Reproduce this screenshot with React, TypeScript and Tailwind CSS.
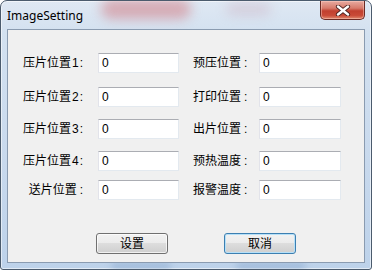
import React from "react";

const rows: { left: string; num: string; right: string; gap: string }[] = [
  { left: "压片位置", num: "1", right: "预压位置", gap: "mt-[23px]" },
  { left: "压片位置", num: "2", right: "打印位置", gap: "mt-[14px]" },
  { left: "压片位置", num: "3", right: "出片位置", gap: "mt-[12px]" },
  { left: "压片位置", num: "4", right: "预热温度", gap: "mt-[12px]" },
  { left: "送片位置", num: "", right: "报警温度", gap: "mt-[9px]" },
];

const font = "font-['Liberation_Sans','Noto_Sans_CJK_SC',sans-serif]";

function Label({ text, num }: { text: string; num?: string }) {
  return (
    <span className="whitespace-nowrap">
      {text}
      {num ? <span className="ml-[1px]">{num}</span> : null}
      <span className={num ? "ml-[1px]" : "ml-[3px]"}>:</span>
    </span>
  );
}

function TextBox({ width }: { width: string }) {
  return (
    <div
      className={`${width} h-[20px] flex items-center pl-[3px] bg-white border border-[#e3e9ef] border-t-[#abadb3] border-l-[#e2e3ea] text-[12px] text-black ${font}`}
    >
      0
    </div>
  );
}

function CloseButton() {
  return (
    <div className="w-[45px] h-[19px] rounded-b-[5px] border border-t-0 border-[#6b2a24] bg-[linear-gradient(#e8aba1,#d77a6b_40%,#c1402f_55%,#c94a37_80%,#e08a6f)] shadow-[inset_0_0_0_1px_rgba(255,210,200,0.45)] flex items-center justify-center">
      <svg width="16" height="11" viewBox="0 0 16 11">
        <path d="M3 1.5 L13 9.5 M13 1.5 L3 9.5" stroke="#4a2220" strokeWidth="4.2" strokeLinecap="round" />
        <path d="M3 1.5 L13 9.5 M13 1.5 L3 9.5" stroke="#ffffff" strokeWidth="2.4" strokeLinecap="round" />
      </svg>
    </div>
  );
}

function DialogButton({ label, isDefault }: { label: string; isDefault?: boolean }) {
  return (
    <button
      className={`w-[72px] h-[21px] rounded-[3px] border text-[12px] text-black ${font} bg-[linear-gradient(#f2f2f2,#ebebeb_50%,#dddddd_50%,#cfcfcf)] ${
        isDefault
          ? "border-[#3c7fb1] shadow-[inset_0_0_0_1px_#b6e0f8]"
          : "border-[#707070] shadow-[inset_0_0_0_1px_rgba(255,255,255,0.7)]"
      }`}
    >
      {label}
    </button>
  );
}

export default function App() {
  return (
    <div className="w-[372px] h-[270px] bg-white">
      <div className="relative h-full flex flex-col overflow-hidden rounded-t-[7px] rounded-b-[3px] border border-[#4b5b6d] bg-[linear-gradient(#dfe8f3,#d3e1f0_12%,#c8d9ed_60%,#bdd2ea)] shadow-[inset_0_0_0_1px_rgba(255,255,255,0.55)]">
        {/* blurred desktop behind the glass */}
        <div className="absolute left-[100px] top-[-2px] w-[90px] h-[20px] rounded-full bg-[#d2858d] opacity-60 blur-[6px]" />
        <div className="absolute left-[225px] top-[2px] w-[45px] h-[12px] rounded-full bg-[#c9a9bb] opacity-40 blur-[6px]" />
        <div className="absolute left-[110px] bottom-[0px] w-[60px] h-[6px] rounded-full bg-[#7e9fc8] opacity-50 blur-[3px]" />
        <div className="absolute left-[235px] bottom-[0px] w-[70px] h-[6px] rounded-full bg-[#7e9fc8] opacity-50 blur-[3px]" />

        <div className="relative h-[28px] flex items-start justify-between">
          <div className="pl-[6px] pt-[7px] text-[12px] leading-[16px] text-black font-['Noto_Sans',sans-serif]">
            ImageSetting
          </div>
          <div className="mr-[6px]">
            <CloseButton />
          </div>
        </div>

        <div className="relative flex-1 mx-[6px] mb-[6px] border border-[#8a9bb0] bg-[#f0f0f0] flex flex-col">
          {rows.map((r, i) => (
            <div key={i} className={`${r.gap} h-[20px] flex items-center text-[12px] text-black ${font}`}>
              <div className="w-[75px] text-right">
                <Label text={r.left} num={r.num} />
              </div>
              <div className="ml-[15px]">
                <TextBox width="w-[81px]" />
              </div>
              <div className="ml-[14px] w-[66px]">
                <Label text={r.right} />
              </div>
              <TextBox width="w-[82px]" />
            </div>
          ))}

          <div className="mt-[33px] flex pl-[88px] gap-[56px]">
            <DialogButton label="设置" />
            <DialogButton label="取消" isDefault />
          </div>
        </div>
      </div>
    </div>
  );
}
